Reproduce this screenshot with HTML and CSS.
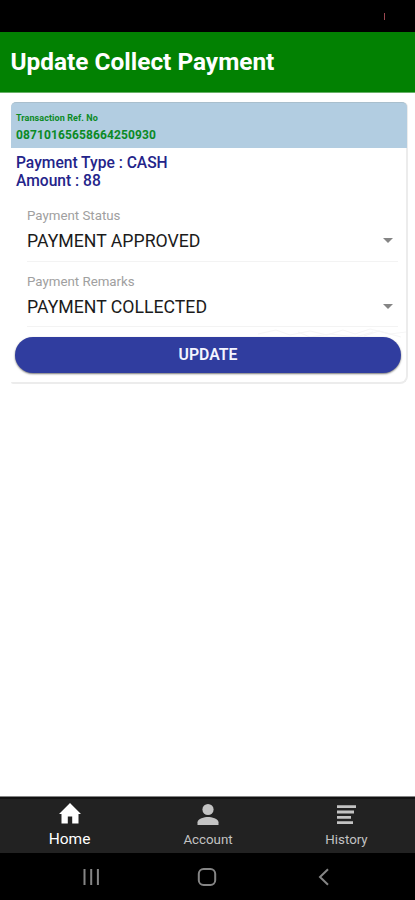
FILE: index.html
```html
<!DOCTYPE html>
<html lang="en">
<head>
<meta charset="utf-8">
<title>Update Collect Payment</title>
<link rel="stylesheet" href="styles.css">
</head>
<body>
<div class="screen">
  <div class="status-bar"><span class="status-mark"></span></div>
  <header class="app-bar"><h1>Update Collect Payment</h1></header>
  <main>
    <section class="card">
      <div class="card-head">
        <div class="ref-label"><span>Transaction Ref. No</span></div>
        <div class="ref-value"><span>08710165658664250930</span></div>
      </div>
      <div class="summary">
        <div class="pay-type">Payment Type : CASH</div>
        <div class="pay-amount">Amount : 88</div>
      </div>
      <div class="field">
        <div class="label">Payment Status</div>
        <div class="select"><span>PAYMENT APPROVED</span><i class="caret"></i></div>
      </div>
      <div class="field">
        <div class="label">Payment Remarks</div>
        <div class="select"><span>PAYMENT COLLECTED</span><i class="caret"></i></div>
      </div>
      <div class="action">
        <svg class="texture" viewBox="0 0 150 12" width="150" height="12"><path d="M2 7l18-4 14 5 20-4 17 4 16-5 12 4 15-5 20 5 16-2M42 5l12 5 20-3 26 3 17-5M108 9l15-5 22 6"/></svg>
        <button class="update">UPDATE</button>
      </div>
    </section>
  </main>
  <nav class="tabs">
    <div class="tab active">
      <svg width="24" height="24" viewBox="0 0 24 24" fill="currentColor"><path d="M9.800 22.500v-7h4.400v7H20.500v-9.500H23L12 2 1 13h2.500v9.500z"/></svg>
      <span>Home</span>
    </div>
    <div class="tab">
      <svg width="24" height="24" viewBox="0 0 24 24" fill="currentColor"><circle cx="12" cy="7.500" r="5.600"/><path d="M1.500 23v-2.800c0-3.600 7-5.300 10.500-5.300s10.500 1.700 10.500 5.300V23z"/></svg>
      <span>Account</span>
    </div>
    <div class="tab">
      <svg width="24" height="24" viewBox="0 0 24 24" stroke="currentColor" stroke-width="2.800"><path d="M2 4.700h19M2 10h17M2 15.300h14M2 20.600h16"/></svg>
      <span>History</span>
    </div>
  </nav>
  <div class="system-nav">
    <svg width="20" height="20" viewBox="0 0 20 20"><path d="M3.500 2v16M10.200 2v16M16.900 2v16"/></svg>
    <svg width="20" height="20" viewBox="0 0 20 20"><rect x="1.800" y="2" width="16.400" height="16" rx="4.800"/></svg>
    <svg width="20" height="20" viewBox="0 0 20 20"><path d="M15 2.200 7 10l8 7.800"/></svg>
  </div>
</div>
</body>
</html>
```
FILE: styles.css
```css
* { box-sizing: border-box; }
body { margin: 0; font-family: Roboto, "Liberation Sans", sans-serif; background: #fff; }
.screen { width: 415px; height: 900px; display: flex; flex-direction: column; overflow: hidden; }
.status-bar { height: 32px; background: #000; display: flex; justify-content: flex-end; padding: 13px 30px 0 0; }
.status-mark { width: 1px; height: 7px; background: #9b4750; }
.app-bar { height: 61px; background: #028102; border-bottom: 1px solid #67b067; display: flex; align-items: center; padding-left: 10.500px; }
h1 { margin: 0; color: #fff; font-size: 24.400px; line-height: 28px; font-weight: 700; white-space: nowrap; }
main { flex: 1; padding: 9px 7px 0 11px; }
.card { height: 282px; border: solid #ececec; border-width: 0 2px 2px 0; border-radius: 5px 5px 8px 2px; display: flex; flex-direction: column; }
.card-head { height: 46px; flex: none; margin-right: -1px; background: #b2cde1; border-top: 1px solid #a9bfcd; border-radius: 5px 5px 0 0; color: #0b8a26; font-weight: 700; padding: 10px 0 0 5px; white-space: nowrap; }
.ref-label { font-size: 9px; line-height: 11px; letter-spacing: .08px; }
.ref-value { font-size: 12px; line-height: 14px; margin-top: 4px; letter-spacing: .12px; }
.summary { height: 53px; flex: none; padding: 6px 0 0 5px; color: #24248a; font-size: 15.600px; line-height: 18px; font-weight: 500; white-space: nowrap; }
.field { height: 61px; flex: none; margin: 0 8px 0 16px; border-bottom: 1px solid #f3f3f3; padding-top: 7px; }
.field + .field { height: 65px; padding-top: 12px; }
.label { font-size: 13.300px; line-height: 15px; color: #a0a0a0; }
.select { display: flex; align-items: center; justify-content: space-between; height: 24px; margin-top: 6px; padding-right: 5px; font-size: 17.700px; color: #1b1b1b; white-space: nowrap; }
.caret { border: 5px solid transparent; border-top-color: #858585; border-bottom: 0; margin-top: -2px; }
.action { position: relative; padding: 10px 5px 0 4px; }
.texture { position: absolute; right: 0; top: 0; fill: none; stroke: #f6f6f6; stroke-width: 1; }
.update { position: relative; display: block; width: 100%; height: 36px; border: 0; border-radius: 18px; background: #303d9f; color: #f4f5ff; font: 600 15.800px/36px Roboto, "Liberation Sans", sans-serif; padding: 0; box-shadow: 0 1px 2px #0008; }
.tabs { height: 57px; background: #222; border-top: 1px solid #858585; box-shadow: inset 0 2px #121212; display: grid; grid-template-columns: 139px 138px 138px; }
.tab { display: flex; flex-direction: column; align-items: center; padding-top: 4px; color: #c3c3c3; font-size: 13.300px; line-height: 18px; }
.tab svg { margin-top: 1px; flex: none; }
.tab span { margin-top: 5px; }
.tab:last-child { padding-left: 1px; }
.tab.active { color: #fff; font-size: 15.500px; }
.tab.active svg { margin-top: 0; }
.system-nav { height: 47px; background: #000; display: grid; grid-template-columns: 20px 20px 20px; column-gap: 96px; padding: 14px 0 0 81px; }
.system-nav svg { fill: none; stroke: #858585; stroke-width: 2; }
```
